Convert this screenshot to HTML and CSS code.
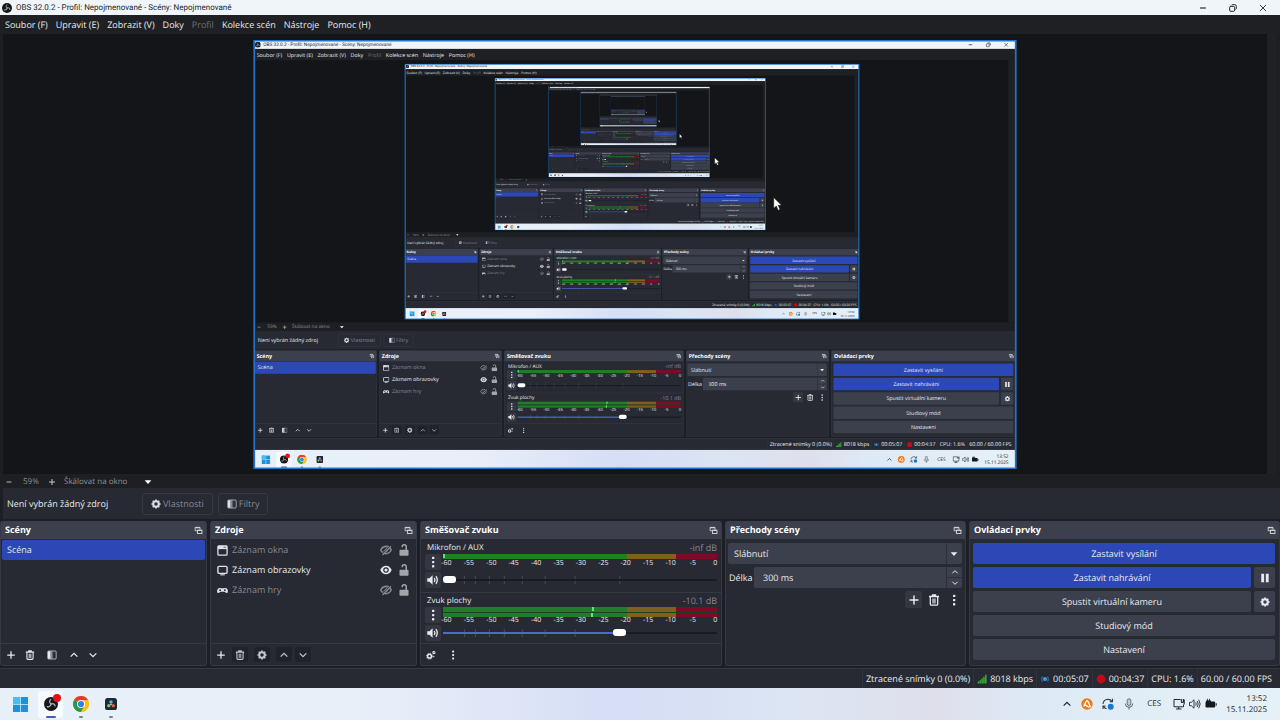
FILE: index.html
```html
<!DOCTYPE html>
<html lang="cs">
<head>
<meta charset="utf-8">
<meta name="viewport" content="width=device-width, initial-scale=1">
<title>OBS 32.0.2 - Profil: Nepojmenované - Scény: Nepojmenované</title>
<link rel="stylesheet" href="styles.css">
</head>
<body>
<svg class="defs" aria-hidden="true">
  <symbol id="i-obs" viewBox="0 0 20 20"><circle cx="10" cy="10" r="10" fill="#15171b"/><g fill="none" stroke="#aeb2b8" stroke-width="1.8" stroke-linecap="round"><path d="M9.500 3.500a4 4 0 0 0 .5 6.500"/><path d="M9.500 3.500a4 4 0 0 0 .5 6.500" transform="rotate(120 10 10)"/><path d="M9.500 3.500a4 4 0 0 0 .5 6.500" transform="rotate(240 10 10)"/></g></symbol>
  <symbol id="i-plus" viewBox="0 0 12 12"><path d="M6 1.500v9M1.500 6h9" stroke="currentColor" stroke-width="1.500" fill="none"/></symbol>
  <symbol id="i-minus" viewBox="0 0 12 12"><path d="M2.500 6h7" stroke="currentColor" stroke-width="1.400" fill="none"/></symbol>
  <symbol id="i-trash" viewBox="0 0 12 12"><path d="M1 2.500h10M4.500 2V1h3v1M2.300 3v7q0 1.200 1.200 1.200h5q1.200 0 1.200-1.200V3" stroke="currentColor" stroke-width="1.300" fill="none"/><path d="M4.200 4.500h3.600v5H4.200z" fill="currentColor" opacity=".65"/></symbol>
  <symbol id="i-filter" viewBox="0 0 12 12"><rect x="1" y="1.200" width="10" height="9.600" rx="1" fill="none" stroke="currentColor" stroke-width="1" opacity=".8"/><path d="M1 1.500h3.200v9H1z" fill="currentColor"/><path d="M4.200 1.500h1.600v9H4.200z" fill="currentColor" opacity=".6"/><path d="M5.800 1.500h1.600v9H5.800z" fill="currentColor" opacity=".3"/></symbol>
  <symbol id="i-up" viewBox="0 0 12 12"><path d="M2 8l4-4 4 4" stroke="currentColor" stroke-width="1.500" fill="none"/></symbol>
  <symbol id="i-down" viewBox="0 0 12 12"><path d="M2 4l4 4 4-4" stroke="currentColor" stroke-width="1.500" fill="none"/></symbol>
  <symbol id="i-caret" viewBox="0 0 12 12"><path d="M2 4h8L6 8.300z" fill="currentColor"/></symbol>
  <symbol id="i-gear" viewBox="0 0 12 12"><circle cx="6" cy="6" r="3.300" fill="none" stroke="currentColor" stroke-width="2.400"/><path d="M6 .5v2M6 9.500v2M.5 6h2M9.500 6h2M2.100 2.100l1.500 1.500M8.400 8.400l1.500 1.500M2.100 9.900l1.500-1.500M8.400 3.600l1.500-1.500" stroke="currentColor" stroke-width="2"/></symbol>
  <symbol id="i-gears" viewBox="0 0 12 12"><g fill="none" stroke="currentColor"><circle cx="4.200" cy="7.400" r="2.300" stroke-width="1.800"/><circle cx="4.200" cy="7.400" r="3.600" stroke-width="1" stroke-dasharray="1.400 1.430"/><circle cx="9.500" cy="3" r="1.300" stroke-width="1.300"/><circle cx="9.300" cy="8" r=".5"/></g></symbol>
  <symbol id="i-kebab" viewBox="0 0 12 12"><g fill="currentColor"><rect x="5" y=".7" width="2.300" height="2.300" rx=".6"/><rect x="5" y="4.900" width="2.300" height="2.300" rx=".6"/><rect x="5" y="9.100" width="2.300" height="2.300" rx=".6"/></g></symbol>
  <symbol id="i-float" viewBox="0 0 12 12"><path d="M8 5.500V1.800H1.500v4.500H4" stroke="currentColor" stroke-width="1.200" fill="none"/><rect x="4.600" y="5.600" width="6" height="4.400" fill="none" stroke="currentColor" stroke-width="1.300"/><path d="M1.500 2.200H8M4.600 6h6" stroke="currentColor" stroke-width="1.600"/></symbol>
  <symbol id="i-window" viewBox="0 0 12 12"><rect x="1" y="1" width="10" height="10" rx="1" fill="none" stroke="currentColor" stroke-width="1.400"/><path d="M1 1h10v3.500H1z" fill="currentColor"/><path d="M7 2.500h3" stroke="#272a33" stroke-width=".7"/></symbol>
  <symbol id="i-monitor" viewBox="0 0 12 12"><rect x="1" y="1.500" width="10" height="7.600" rx="1.300" fill="none" stroke="currentColor" stroke-width="1.500"/><path d="M3.500 10.700h5" stroke="currentColor" stroke-width="1.200"/></symbol>
  <symbol id="i-pad" viewBox="0 0 12 12"><path d="M3 3.200q3 .6 6 0 2.600 0 2.900 3.600 0 2.400-1.700 2L8.300 7.400H3.700L1.800 8.800Q.1 9.200.1 6.800.4 3.200 3 3.200z" fill="currentColor"/><circle cx="3.400" cy="5.600" r="1" fill="#272a33"/><circle cx="8.600" cy="5.600" r="1" fill="#272a33"/></symbol>
  <symbol id="i-eye" viewBox="0 0 12 12"><path d="M.3 6Q2.400 1.700 6 1.700t5.700 4.300Q9.600 10.300 6 10.300T.3 6z" fill="currentColor"/><circle cx="6" cy="6" r="2.200" fill="none" stroke="#272a33" stroke-width="1.200"/></symbol>
  <symbol id="i-eyeoff" viewBox="0 0 12 12"><path d="M.8 6Q2.600 2.400 6 2.400T11.200 6Q9.400 9.600 6 9.600T.8 6z" fill="none" stroke="currentColor" stroke-width="1.600"/><path d="M3.700 7.600l3.400-3.300M5.500 8l3-3" stroke="currentColor" stroke-width="1.300"/><path d="M1.700 10.500l8.800-8.800" stroke="#272a33" stroke-width="1"/><path d="M2.500 11l8.500-8.800" stroke="currentColor" stroke-width="1.200"/></symbol>
  <symbol id="i-lock" viewBox="0 0 12 12"><rect x="1.500" y="5.800" width="9" height="6" rx=".8" fill="currentColor"/><path d="M4.200 3.300V2.800q0-2 2-2t2 2v3.500" fill="none" stroke="currentColor" stroke-width="1.500"/></symbol>
  <symbol id="i-sound" viewBox="0 0 12 12"><path d="M.3 4.200h2.200L5.600 1.300v9.400L2.500 7.800H.3z" fill="currentColor"/><path d="M7.200 4q1.400 2 0 4M8.900 2.200q2.800 3.800 0 7.600" fill="none" stroke="currentColor" stroke-width="1.300"/></symbol>
  <symbol id="i-pause" viewBox="0 0 12 12"><path d="M1.500 .9h3.400v10.200H1.500zM7 .9h3.400v10.200H7z" fill="currentColor"/></symbol>
  <symbol id="i-bars" viewBox="0 0 12 12"><path d="M.8 9h1.500v2.500H.8zM3 7.500h1.500v4H3zM5.300 5.500h1.500v6H5.300zM7.600 3.300h1.500v8.200H7.600zM9.900 1h1.500v10.500H9.900z" fill="#35d02c"/></symbol>
  <symbol id="i-stream" viewBox="0 0 12 12"><circle cx="6" cy="6" r="2.400" fill="#3d9be0"/><path d="M3 2.800q-2 3.200 0 6.400M9 2.800q2 3.200 0 6.400" fill="none" stroke="#2766a8" stroke-width="1.500"/></symbol>
  <symbol id="i-rec" viewBox="0 0 12 12"><circle cx="6" cy="6" r="5.300" fill="#c40a16"/></symbol>
  <symbol id="i-restore" viewBox="0 0 12 12"><g fill="none" stroke="currentColor" stroke-width="1.200"><rect x="2" y="4" width="6" height="6" rx="1.500"/><path d="M4 2.800q.3-.8 1.700-.8h2.300q2 0 2 2v2.300q0 1-1 1.500"/></g></symbol>
  <symbol id="i-close" viewBox="0 0 12 12"><path d="M2.300 2.300l7.400 7.400M9.700 2.300l-7.400 7.400" stroke="currentColor" stroke-width="1.100"/></symbol>
  <symbol id="i-win" viewBox="0 0 16 16"><path d="M0 0h7.600v7.600H0zM8.400 0H16v7.600H8.400zM0 8.400h7.600V16H0zM8.400 8.400H16V16H8.400z" fill="#1a93dc"/><path d="M0 0h7.600v7.600H0z" fill="#48bdf0"/></symbol>
  <symbol id="i-chrome" viewBox="0 0 16 16"><circle cx="8" cy="8" r="8" fill="#fbc116"/><path d="M8 8L1.070 4A8 8 0 0 1 14.930 4H8z" fill="#e33b2e"/><path d="M8 8L1.070 4A8 8 0 0 0 8 16l3.500-6z" fill="#229a48"/><path d="M8 4h6.930A8 8 0 0 1 8 16l3.460-6z" fill="#fbc116"/><circle cx="8" cy="8" r="4" fill="#fff"/><circle cx="8" cy="8" r="3.100" fill="#3a7de8"/></symbol>
  <symbol id="i-resolve" viewBox="0 0 16 16"><rect width="16" height="16" rx="3.500" fill="#1f2933"/><circle cx="8" cy="5.200" r="2.300" fill="#57b9dc"/><circle cx="5" cy="10.200" r="2.200" fill="#7fc66a"/><circle cx="11" cy="10.200" r="2.200" fill="#e2604d"/><circle cx="8" cy="8.500" r="1" fill="#f4f4f4"/></symbol>
  <symbol id="i-avast" viewBox="0 0 12 12"><circle cx="6" cy="6" r="5.700" fill="#ee7a12"/><path d="M2.800 8.500L5.300 3.300q.8-1.300 1.600 0l2.400 5.200-1.700.5-4.800-3" fill="none" stroke="#fff" stroke-width="1.300"/></symbol>
  <symbol id="i-sync" viewBox="0 0 12 12"><path d="M1 6a5 5 0 0 1 9-2.600M10.500.8v3H7.700M4.500 10.800A5 5 0 0 1 1.300 8M1 11V8h2.500" fill="none" stroke="#333a40" stroke-width="1.100"/><circle cx="8.700" cy="8.700" r="3" fill="#1479cf"/></symbol>
  <symbol id="i-mic" viewBox="0 0 12 12"><rect x="4.200" y=".8" width="3.600" height="6.700" rx="1.800" fill="#c5ccd2" stroke="#50575e" stroke-width=".8"/><path d="M2.300 5.500q0 3.800 3.700 3.800t3.700-3.800M6 9.300v2.300" fill="none" stroke="#50575e" stroke-width=".9"/></symbol>
  <symbol id="i-net" viewBox="0 0 12 12"><path d="M7.500 1.500H1v7.300h9.500V6.500M3 11h5.500M5.700 9v2" fill="none" stroke="#22282e" stroke-width="1"/><path d="M8.300 1v2.500q0 1 1 1t1-1V1M11.200 1.500v5" fill="none" stroke="#22282e" stroke-width="1.100"/></symbol>
  <symbol id="i-vol" viewBox="0 0 12 12"><path d="M.5 4.300h1.800L5 1.800v8.400L2.300 7.700H.5zM6.700 4.300q1.100 1.700 0 3.400M8.200 3q2 3 0 6M9.700 1.700q3 4.300 0 8.600" fill="none" stroke="#22282e" stroke-width=".9"/></symbol>
  <symbol id="i-battery" viewBox="0 0 12 12"><rect x=".5" y="3.500" width="9.700" height="6" rx="1.200" fill="#14191e"/><path d="M10.700 5.200h1v2.500h-1z" fill="#14191e"/><path d="M2.500.8v2M4.500.8v2M1.500 2.800h4v1.500q-2 2-4 0z" fill="#14191e" stroke="#14191e" stroke-width=".8"/></symbol>
</svg>

<div class="desktop">
  <header class="titlebar">
    <svg class="ic"><use href="#i-obs"/></svg>
    <h1>OBS 32.0.2 - Profil: Nepojmenované - Scény: Nepojmenované</h1>
    <button aria-label="Minimalizovat"><svg class="ic"><use href="#i-minus"/></svg></button>
    <button aria-label="Obnovit"><svg class="ic"><use href="#i-restore"/></svg></button>
    <button aria-label="Zavřít"><svg class="ic"><use href="#i-close"/></svg></button>
  </header>

  <nav class="menubar">
    <button>Soubor (F)</button><button>Upravit (E)</button><button>Zobrazit (V)</button><button>Doky</button><button disabled>Profil</button><button>Kolekce scén</button><button>Nástroje</button><button>Pomoc (H)</button>
  </nav>

  <main class="stage">
    <div class="canvas">
      <svg class="capture" viewBox="0 0 1280 720" role="img" aria-label="Záznam obrazovky">
        <foreignObject width="1280" height="720"></foreignObject>
        <rect class="selection" x="1" y="1" width="1278" height="718"/>
      </svg>
    </div>
    <div class="scrollbar"></div>
  </main>

  <div class="zoombar">
    <button aria-label="Oddálit"><svg class="ic"><use href="#i-minus"/></svg></button>
    <span class="percent">59%</span>
    <button aria-label="Přiblížit"><svg class="ic"><use href="#i-plus"/></svg></button>
    <label class="scaling"><select aria-label="Měřítko náhledu"><option>Škálovat na okno</option></select><svg class="ic"><use href="#i-caret"/></svg></label>
  </div>

  <div class="context">
    <span class="hint">Není vybrán žádný zdroj</span>
    <button><svg class="ic"><use href="#i-gear"/></svg>Vlastnosti</button>
    <button><svg class="ic"><use href="#i-filter"/></svg>Filtry</button>
  </div>

  <div class="docks">
    <section class="dock">
      <div class="dock-head"><h2>Scény</h2><svg class="ic"><use href="#i-float"/></svg></div>
      <ul class="list scenes"><li class="selected">Scéna</li></ul>
      <div class="tools">
        <button aria-label="Přidat"><svg class="ic"><use href="#i-plus"/></svg></button>
        <button aria-label="Odebrat"><svg class="ic"><use href="#i-trash"/></svg></button>
        <button class="apart" aria-label="Filtry"><svg class="ic"><use href="#i-filter"/></svg></button>
        <button class="apart" aria-label="Nahoru"><svg class="ic"><use href="#i-up"/></svg></button>
        <button aria-label="Dolů"><svg class="ic"><use href="#i-down"/></svg></button>
      </div>
    </section>

    <section class="dock">
      <div class="dock-head"><h2>Zdroje</h2><svg class="ic"><use href="#i-float"/></svg></div>
      <ul class="list sources">
        <li class="hidden"><svg class="ic kind"><use href="#i-window"/></svg><span>Záznam okna</span><button aria-label="Zobrazit"><svg class="ic"><use href="#i-eyeoff"/></svg></button><button class="lock" aria-label="Zamknout"><svg class="ic"><use href="#i-lock"/></svg></button></li>
        <li><svg class="ic kind"><use href="#i-monitor"/></svg><span>Záznam obrazovky</span><button aria-label="Skrýt"><svg class="ic"><use href="#i-eye"/></svg></button><button class="lock" aria-label="Zamknout"><svg class="ic"><use href="#i-lock"/></svg></button></li>
        <li class="hidden"><svg class="ic kind"><use href="#i-pad"/></svg><span>Záznam hry</span><button aria-label="Zobrazit"><svg class="ic"><use href="#i-eyeoff"/></svg></button><button class="lock" aria-label="Zamknout"><svg class="ic"><use href="#i-lock"/></svg></button></li>
      </ul>
      <div class="tools">
        <button aria-label="Přidat"><svg class="ic"><use href="#i-plus"/></svg></button>
        <button class="dim" aria-label="Odebrat"><svg class="ic"><use href="#i-trash"/></svg></button>
        <button class="dim apart" aria-label="Vlastnosti"><svg class="ic"><use href="#i-gear"/></svg></button>
        <button class="dim apart" aria-label="Nahoru"><svg class="ic"><use href="#i-up"/></svg></button>
        <button class="dim" aria-label="Dolů"><svg class="ic"><use href="#i-down"/></svg></button>
      </div>
    </section>

    <section class="dock">
      <div class="dock-head"><h2>Směšovač zvuku</h2><svg class="ic"><use href="#i-float"/></svg></div>
      <div class="mixer">
        <div class="channel">
          <div class="names"><span>Mikrofon / AUX</span><output>-inf dB</output></div>
          <div class="strip">
            <button aria-label="Možnosti"><svg class="ic"><use href="#i-kebab"/></svg></button>
            <div class="level"><div class="meter"><i class="peak" style="left:0%"></i></div><div class="scale"></div></div>
            <button aria-label="Ztlumit"><svg class="ic"><use href="#i-sound"/></svg></button>
            <div class="fader"><svg class="ticks" viewBox="0 0 275 12" preserveAspectRatio="none"><path d="M21.500 0v12M32.500 0v12M46.500 0v12M61.500 0v12M79.500 0v12M102.500 0v12M132.500 0v12M177.500 0v12"/></svg><input type="range" aria-label="Hlasitost Mikrofon / AUX" min="0" max="100" value="0" style="--v:0%"></div>
          </div>
        </div>
        <div class="channel stereo">
          <div class="names"><span>Zvuk plochy</span><output>-10.1 dB</output></div>
          <div class="strip">
            <button aria-label="Možnosti"><svg class="ic"><use href="#i-kebab"/></svg></button>
            <div class="level"><div class="meter"><i class="peak" style="left:54.500%"></i></div><div class="meter"><i class="peak" style="left:54%"></i></div><div class="scale"></div></div>
            <button aria-label="Ztlumit"><svg class="ic"><use href="#i-sound"/></svg></button>
            <div class="fader"><svg class="ticks" viewBox="0 0 275 12" preserveAspectRatio="none"><path d="M21.500 0v12M32.500 0v12M46.500 0v12M61.500 0v12M79.500 0v12M102.500 0v12M132.500 0v12M177.500 0v12"/></svg><input type="range" aria-label="Hlasitost Zvuk plochy" min="0" max="100" value="65" style="--v:65%"></div>
          </div>
        </div>
      </div>
      <div class="tools">
        <button aria-label="Pokročilé vlastnosti zvuku"><svg class="ic"><use href="#i-gears"/></svg></button>
        <button class="apart" aria-label="Nabídka směšovače"><svg class="ic"><use href="#i-kebab"/></svg></button>
      </div>
    </section>

    <section class="dock">
      <div class="dock-head"><h2>Přechody scény</h2><svg class="ic"><use href="#i-float"/></svg></div>
      <div class="transitions">
        <label class="field"><select aria-label="Přechod"><option>Slábnutí</option></select><svg class="ic"><use href="#i-caret"/></svg></label>
        <div class="duration">
          <label><span>Délka</span><input type="text" value="300 ms"></label>
          <div class="spin"><button aria-label="Zvýšit"><svg class="ic"><use href="#i-up"/></svg></button><button aria-label="Snížit"><svg class="ic"><use href="#i-down"/></svg></button></div>
        </div>
        <div class="actions">
          <button class="raised" aria-label="Přidat přechod"><svg class="ic"><use href="#i-plus"/></svg></button>
          <button aria-label="Odebrat přechod"><svg class="ic"><use href="#i-trash"/></svg></button>
          <button aria-label="Vlastnosti přechodu"><svg class="ic"><use href="#i-kebab"/></svg></button>
        </div>
      </div>
    </section>

    <section class="dock">
      <div class="dock-head"><h2>Ovládací prvky</h2><svg class="ic"><use href="#i-float"/></svg></div>
      <div class="controls">
        <div><button class="on">Zastavit vysílání</button></div>
        <div><button class="on">Zastavit nahrávání</button><button class="square" aria-label="Pozastavit nahrávání"><svg class="ic"><use href="#i-pause"/></svg></button></div>
        <div><button>Spustit virtuální kameru</button><button class="square" aria-label="Nastavit virtuální kameru"><svg class="ic"><use href="#i-gear"/></svg></button></div>
        <div><button>Studiový mód</button></div>
        <div><button>Nastavení</button></div>
      </div>
    </section>
  </div>

  <footer class="status">
    <span>Ztracené snímky 0 (0.0%)</span>
    <span><svg class="ic"><use href="#i-bars"/></svg>8018 kbps</span>
    <span><svg class="ic"><use href="#i-stream"/></svg>00:05:07</span>
    <span><svg class="ic"><use href="#i-rec"/></svg>00:04:37</span>
    <span>CPU: 1.6%</span>
    <span>60.00 / 60.00 FPS</span>
  </footer>

  <div class="taskbar">
    <button class="app" aria-label="Start"><svg class="ic start"><use href="#i-win"/></svg></button>
    <button class="app active" aria-label="OBS Studio"><svg class="ic"><use href="#i-obs"/></svg><i class="badge"></i></button>
    <button class="app running" aria-label="Google Chrome"><svg class="ic"><use href="#i-chrome"/></svg></button>
    <button class="app running" aria-label="DaVinci Resolve"><svg class="ic resolve"><use href="#i-resolve"/></svg></button>
    <div class="tray">
      <svg class="ic small"><use href="#i-up"/></svg>
      <svg class="ic"><use href="#i-avast"/></svg>
      <svg class="ic"><use href="#i-sync"/></svg>
      <svg class="ic"><use href="#i-mic"/></svg>
      <span>CES</span>
      <div class="quick"><svg class="ic"><use href="#i-net"/></svg><svg class="ic"><use href="#i-vol"/></svg><svg class="ic"><use href="#i-battery"/></svg></div>
      <time datetime="2025-11-15T13:52">13:52<br>15.11.2025</time>
    </div>
  </div>

  <svg class="cursor" viewBox="0 0 10 16"><path d="M.7.700v12.300l2.900-2.700 2.100 4.900 2.200-.9-2.100-4.800h3.900z" fill="#fff" stroke="#111" stroke-width=".6"/></svg>
</div>
<script src="app.js"></script>
</body>
</html>
```

FILE: styles.css
```css
:root {
  --base: #272a33;
  --deep: #1d1f26;
  --raised: #3c404d;
  --line: #353944;
  --blue: #2b48b6;
  --text: #e8eaee;
  --muted: #868991;
}

* { box-sizing: border-box; }

body {
  margin: 0;
  height: 100vh;
  font: 9px/12px "Open Sans", "Noto Sans", sans-serif;
  text-rendering: geometricPrecision;
  color: var(--text);
}

button, input, select {
  margin: 0;
  padding: 0;
  border: 0;
  font: inherit;
  text-rendering: inherit;
  color: inherit;
  background: none;
  appearance: none;
  outline: none;
}

h1, h2, ul { margin: 0; padding: 0; font-size: inherit; list-style: none; }

.defs { position: absolute; width: 0; height: 0; }
.ic { display: block; width: 10px; height: 10px; flex: none; }

.desktop {
  position: relative;
  display: flex;
  flex-direction: column;
  height: 100%;
  overflow: hidden;
  background: var(--deep);
}

/* Title and menus */
.titlebar {
  display: flex;
  align-items: center;
  height: 15px;
  padding-left: 2px;
  padding-right: 2px;
  background: #f0f5f9;
  color: #24272c;
}
.titlebar h1 { flex: 1; margin-left: 4px; font-family: Roboto, "Open Sans", sans-serif; font-size: 8px; font-weight: 400; }
.titlebar button { display: grid; place-items: center; width: 30px; }

.menubar {
  display: flex;
  gap: 8px;
  height: 19px;
  padding: 0 5px;
  background: #1e2024;
}
.menubar button:disabled { color: #6d6f75; }

/* Preview */
.stage { display: flex; flex: 1 1 0; min-height: 0; padding: 0 4px 0 3px; background: #1c1e22; }
.canvas { display: flex; flex: 1; min-width: 0; padding: 6px 5px 5px; background: #131519; }
.scrollbar { width: 9px; background: #1f2125; }
.capture { display: block; flex: 1; min-width: 0; min-height: 0; }
.selection { fill: none; stroke: #2373c4; stroke-width: 3; }

.zoombar {
  display: flex;
  align-items: center;
  height: 14px;
  padding: 1px 0 0 5px;
  font-size: 8px;
  color: #8d9096;
  background: #1d1f23;
}
.zoombar button { color: #c5c7cb; }
.zoombar button .ic { width: 8px; height: 8px; }
.percent { width: 35px; padding-left: 10px; }
.scaling { display: grid; align-items: center; width: 89px; margin-left: 8px; }
.scaling > * { grid-area: 1 / 1; }
.scaling .ic { justify-self: end; color: #fff; pointer-events: none; }

.context {
  display: flex;
  align-items: center;
  gap: 5px;
  height: 31px;
  margin: 0 0 2px 3px;
  padding-left: 4px;
  background: var(--base);
}
.hint { width: 130px; }
.context button {
  display: flex;
  align-items: center;
  gap: 2px;
  height: 22px;
  padding: 0 8px;
  border: 1px solid var(--line);
  border-radius: 3px;
  color: var(--muted);
}
.context .ic { color: #dcdee3; }

/* Docks */
.docks {
  display: grid;
  grid-template-columns: 207fr 207fr 302fr 241fr 311fr;
  gap: 3px;
  height: 145px;
}
.dock {
  display: flex;
  flex-direction: column;
  min-width: 0;
  border: 1px solid var(--line);
  border-top: 0;
  border-radius: 3px;
  background: var(--base);
}
.dock-head {
  display: flex;
  align-items: center;
  justify-content: space-between;
  height: 18px;
  padding: 0 3px 0 4px;
  border-radius: 2px 2px 0 0;
  background: var(--raised);
}
.dock-head h2 { font-weight: 700; color: #fff; }
.dock-head .ic { width: 9px; height: 9px; color: #cfd1d6; }

.list { flex: 1; padding: 1px; }
.list li { display: flex; align-items: center; height: 20px; padding: 0 5px; }
.selected { border-radius: 2px; background: var(--blue); }
.sources .kind { width: 11px; height: 11px; margin-right: 4px; color: #dfe1e6; }
.sources span { flex: 1; }
.sources button { margin-right: 6px; }
.sources button .ic { width: 12px; height: 12px; }
.list .lock { margin-right: 0; color: #a3a5a9; }
.sources .hidden { color: var(--muted); }

.tools {
  display: flex;
  align-items: center;
  gap: 3px;
  height: 22px;
  padding: 0 2px;
  border-top: 1px solid var(--line);
}
.tools button { display: grid; place-items: center; width: 16px; height: 15px; border-radius: 2px; }
.tools .apart { margin-left: 3px; }
.tools .dim { background: #20222a; color: #c3c5ca; }

/* Mixer */
.mixer { flex: 1; }
.channel { height: 53px; padding: 3px 4px 0; }
.names { display: flex; justify-content: space-between; height: 12px; padding-left: 2px; font-size: 8px; }
.names output { font-size: 9px; color: var(--muted); }
.strip { display: grid; grid-template-columns: 16px 1fr; gap: 2px; }
.strip button { display: grid; place-items: center; height: 16px; border-radius: 2px; background: #343742; }
.strip button .ic { width: 12px; height: 12px; }
.meter {
  position: relative;
  height: 5px;
  background: linear-gradient(90deg, #227d27 67%, #80601a 67% 85%, #7d0b26 85%);
}
.meter + .meter { border-top: 1px solid #17431f; }
.peak { position: absolute; top: 0; width: 2px; height: 4px; background: #4ff065; }
.scale { display: flex; justify-content: space-between; margin: 0 -4px 0 -2px; font-size: 7px; line-height: 9px; }
.scale span { width: 11px; text-align: center; }
.stereo { height: 51px; padding-top: 2px; border-top: 1px solid var(--line); }
.stereo .strip { row-gap: 0; }
.stereo .scale { line-height: 8px; }
.fader { display: grid; align-items: center; }
.fader > * { grid-area: 1 / 1; width: 100%; }
.ticks { height: 8px; fill: none; stroke: #50535c; stroke-width: 1; }
.fader input { height: 12px; }
.fader input::-webkit-slider-runnable-track {
  height: 2px;
  background: linear-gradient(90deg, #4d68cf var(--v), #191b21 var(--v));
}
.fader input::-webkit-slider-thumb {
  appearance: none;
  width: 13px;
  height: 7px;
  margin-top: -3px;
  border-radius: 3px;
  background: #fff;
}

/* Transitions */
.transitions { display: flex; flex-direction: column; gap: 3px; padding: 4px 3px 0 2px; }
.field { display: grid; align-items: center; height: 21px; border-radius: 2px; background: var(--raised); }
.field > * { grid-area: 1 / 1; }
.field select { padding-left: 6px; margin-right: 15px; height: 21px; border-right: 1px solid #2d303a; }
.field .ic { justify-self: end; margin-right: 3px; pointer-events: none; }
.duration { display: flex; height: 21px; }
.duration label { display: flex; flex: 1; align-items: center; min-width: 0; }
.duration span { width: 26px; padding-left: 1px; }
.duration input { flex: 1; min-width: 0; height: 21px; padding-left: 9px; border-radius: 2px 0 0 2px; background: var(--raised); }
.spin { display: grid; width: 16px; border-left: 1px solid #2d303a; border-radius: 0 2px 2px 0; background: var(--raised); }
.spin button { display: grid; place-items: center; }
.spin button + button { border-top: 1px solid #2d303a; }
.spin .ic { width: 8px; height: 8px; }
.actions { display: flex; justify-content: flex-end; gap: 3px; }
.actions button { display: grid; place-items: center; width: 17px; height: 17px; border-radius: 2px; }
.actions .ic { width: 12px; height: 12px; }
.actions .raised { background: #343742; }

/* Controls */
.controls { display: grid; gap: 3px; padding: 4px 4px 0 3px; }
.controls div { display: flex; gap: 3px; }
.controls button { display: grid; place-items: center; flex: 1; height: 21px; border-radius: 2px; background: var(--raised); }
.controls .on { background: var(--blue); }
.controls .square { flex: none; width: 21px; }

/* Status */
.status {
  display: flex;
  justify-content: flex-end;
  height: 20px;
  margin-top: 2px;
  padding-right: 5px;
  border-top: 1px solid var(--line);
  background: var(--base);
}
.status span { display: flex; align-items: center; gap: 3px; padding: 0 3px; border-left: 1px solid #30333d; }

/* Taskbar */
.taskbar {
  display: flex;
  align-items: center;
  height: 32px;
  padding-left: 8px;
  background: linear-gradient(90deg, #e7f0f8, #e9eff9 28%, #d5def5 48%, #dce5f3 62%, #dfdfec 73%, #dde9f5 80%, #e6f1f7);
  color: #23282e;
}
.app { position: relative; display: grid; place-items: center; width: 25px; height: 27px; margin-right: 5px; border-radius: 3px; }
.app .ic { width: 16px; height: 16px; }
.app .start { width: 15px; height: 15px; }
.app .resolve { width: 12px; height: 12px; }
.app.active { background: #f8fbfd; }
.app.active .ic { width: 14px; height: 14px; }
.app::after { position: absolute; bottom: 0; height: 2px; border-radius: 1px; }
.app.running::after { content: ""; width: 4px; background: #7c838b; }
.app.active::after { content: ""; width: 10px; background: #4a5bb0; }
.badge { position: absolute; top: 3px; right: 2px; width: 8px; height: 8px; border-radius: 50%; background: #ea0f17; }

.tray { display: flex; align-items: center; gap: 9px; margin-left: auto; padding-right: 13px; font-size: 8px; }
.tray .ic { width: 12px; height: 12px; }
.tray .small { width: 10px; height: 10px; }
.tray > span { margin: 0 3px; }
.tray .quick { display: flex; gap: 4px; }
time { text-align: right; line-height: 11px; }

.cursor { position: absolute; left: 773px; top: 197px; width: 9px; height: 14px; }
```

FILE: app.js
```js
// Scale labels under each level meter, every 5 dB.
document.querySelectorAll('.scale').forEach((scale) => {
  for (let db = -60; db <= 0; db += 5) {
    const label = document.createElement('span');
    label.textContent = db;
    scale.append(label);
  }
});

// The display capture contains the desktop itself, so it repeats inside its own preview.
const desktop = document.querySelector('.desktop');
const template = desktop.cloneNode(true);
template.inert = true;

// Copies this deep are a few dozen pixels wide: only their shapes can be seen.
function dropText(root) {
  const walker = document.createTreeWalker(root, NodeFilter.SHOW_TEXT);
  while (walker.nextNode()) walker.currentNode.data = '';
  root.querySelectorAll('input[type="text"]').forEach((input) => input.setAttribute('value', ''));
}

const DEPTH = 7;
let inner = null;
for (let level = DEPTH; level > 0; level--) {
  const copy = template.cloneNode(true);
  if (level > DEPTH - 2) dropText(copy);
  if (inner) copy.querySelector('foreignObject').append(inner);
  inner = copy;
}
desktop.querySelector('foreignObject').append(inner);
```
